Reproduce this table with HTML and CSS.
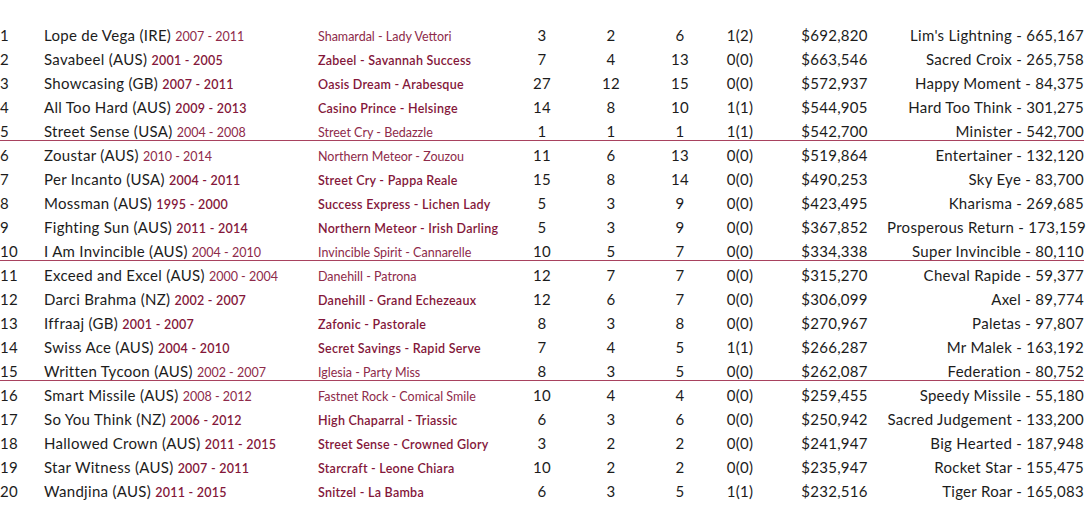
FILE: index.html
```html
<!DOCTYPE html>
<html lang="en">
<head>
<meta charset="utf-8">
<title>Sires</title>
<link rel="stylesheet" href="styles.css">
</head>
<body>
<div class="table">
  <div class="row lt"><span class="c rank">1</span><span class="c name">Lope de Vega (IRE) <em>2007 - 2011</em></span><span class="c par">Shamardal - Lady Vettori</span><span class="c n1">3</span><span class="c n2">2</span><span class="c n3">6</span><span class="c n4">1(2)</span><span class="c money">$692,820</span><span class="c best">Lim's Lightning - 665,167</span></div>
  <div class="row"><span class="c rank">2</span><span class="c name">Savabeel (AUS) <em>2001 - 2005</em></span><span class="c par">Zabeel - Savannah Success</span><span class="c n1">7</span><span class="c n2">4</span><span class="c n3">13</span><span class="c n4">0(0)</span><span class="c money">$663,546</span><span class="c best">Sacred Croix - 265,758</span></div>
  <div class="row"><span class="c rank">3</span><span class="c name">Showcasing (GB) <em>2007 - 2011</em></span><span class="c par">Oasis Dream - Arabesque</span><span class="c n1">27</span><span class="c n2">12</span><span class="c n3">15</span><span class="c n4">0(0)</span><span class="c money">$572,937</span><span class="c best">Happy Moment - 84,375</span></div>
  <div class="row"><span class="c rank">4</span><span class="c name">All Too Hard (AUS) <em>2009 - 2013</em></span><span class="c par">Casino Prince - Helsinge</span><span class="c n1">14</span><span class="c n2">8</span><span class="c n3">10</span><span class="c n4">1(1)</span><span class="c money">$544,905</span><span class="c best">Hard Too Think - 301,275</span></div>
  <div class="row lt sep"><span class="c rank">5</span><span class="c name">Street Sense (USA) <em>2004 - 2008</em></span><span class="c par">Street Cry - Bedazzle</span><span class="c n1">1</span><span class="c n2">1</span><span class="c n3">1</span><span class="c n4">1(1)</span><span class="c money">$542,700</span><span class="c best">Minister - 542,700</span></div>
  <div class="row lt"><span class="c rank">6</span><span class="c name">Zoustar (AUS) <em>2010 - 2014</em></span><span class="c par">Northern Meteor - Zouzou</span><span class="c n1">11</span><span class="c n2">6</span><span class="c n3">13</span><span class="c n4">0(0)</span><span class="c money">$519,864</span><span class="c best">Entertainer - 132,120</span></div>
  <div class="row"><span class="c rank">7</span><span class="c name">Per Incanto (USA) <em>2004 - 2011</em></span><span class="c par">Street Cry - Pappa Reale</span><span class="c n1">15</span><span class="c n2">8</span><span class="c n3">14</span><span class="c n4">0(0)</span><span class="c money">$490,253</span><span class="c best">Sky Eye - 83,700</span></div>
  <div class="row"><span class="c rank">8</span><span class="c name">Mossman (AUS) <em>1995 - 2000</em></span><span class="c par">Success Express - Lichen Lady</span><span class="c n1">5</span><span class="c n2">3</span><span class="c n3">9</span><span class="c n4">0(0)</span><span class="c money">$423,495</span><span class="c best">Kharisma - 269,685</span></div>
  <div class="row"><span class="c rank">9</span><span class="c name">Fighting Sun (AUS) <em>2011 - 2014</em></span><span class="c par">Northern Meteor - Irish Darling</span><span class="c n1">5</span><span class="c n2">3</span><span class="c n3">9</span><span class="c n4">0(0)</span><span class="c money">$367,852</span><span class="c best">Prosperous Return - 173,159</span></div>
  <div class="row lt sep"><span class="c rank">10</span><span class="c name">I Am Invincible (AUS) <em>2004 - 2010</em></span><span class="c par">Invincible Spirit - Cannarelle</span><span class="c n1">10</span><span class="c n2">5</span><span class="c n3">7</span><span class="c n4">0(0)</span><span class="c money">$334,338</span><span class="c best">Super Invincible - 80,110</span></div>
  <div class="row lt"><span class="c rank">11</span><span class="c name">Exceed and Excel (AUS) <em>2000 - 2004</em></span><span class="c par">Danehill - Patrona</span><span class="c n1">12</span><span class="c n2">7</span><span class="c n3">7</span><span class="c n4">0(0)</span><span class="c money">$315,270</span><span class="c best">Cheval Rapide - 59,377</span></div>
  <div class="row"><span class="c rank">12</span><span class="c name">Darci Brahma (NZ) <em>2002 - 2007</em></span><span class="c par">Danehill - Grand Echezeaux</span><span class="c n1">12</span><span class="c n2">6</span><span class="c n3">7</span><span class="c n4">0(0)</span><span class="c money">$306,099</span><span class="c best">Axel - 89,774</span></div>
  <div class="row"><span class="c rank">13</span><span class="c name">Iffraaj (GB) <em>2001 - 2007</em></span><span class="c par">Zafonic - Pastorale</span><span class="c n1">8</span><span class="c n2">3</span><span class="c n3">8</span><span class="c n4">0(0)</span><span class="c money">$270,967</span><span class="c best">Paletas - 97,807</span></div>
  <div class="row"><span class="c rank">14</span><span class="c name">Swiss Ace (AUS) <em>2004 - 2010</em></span><span class="c par">Secret Savings - Rapid Serve</span><span class="c n1">7</span><span class="c n2">4</span><span class="c n3">5</span><span class="c n4">1(1)</span><span class="c money">$266,287</span><span class="c best">Mr Malek - 163,192</span></div>
  <div class="row lt sep"><span class="c rank">15</span><span class="c name">Written Tycoon (AUS) <em>2002 - 2007</em></span><span class="c par">Iglesia - Party Miss</span><span class="c n1">8</span><span class="c n2">3</span><span class="c n3">5</span><span class="c n4">0(0)</span><span class="c money">$262,087</span><span class="c best">Federation - 80,752</span></div>
  <div class="row lt"><span class="c rank">16</span><span class="c name">Smart Missile (AUS) <em>2008 - 2012</em></span><span class="c par">Fastnet Rock - Comical Smile</span><span class="c n1">10</span><span class="c n2">4</span><span class="c n3">4</span><span class="c n4">0(0)</span><span class="c money">$259,455</span><span class="c best">Speedy Missile - 55,180</span></div>
  <div class="row"><span class="c rank">17</span><span class="c name">So You Think (NZ) <em>2006 - 2012</em></span><span class="c par">High Chaparral - Triassic</span><span class="c n1">6</span><span class="c n2">3</span><span class="c n3">6</span><span class="c n4">0(0)</span><span class="c money">$250,942</span><span class="c best">Sacred Judgement - 133,200</span></div>
  <div class="row"><span class="c rank">18</span><span class="c name">Hallowed Crown (AUS) <em>2011 - 2015</em></span><span class="c par">Street Sense - Crowned Glory</span><span class="c n1">3</span><span class="c n2">2</span><span class="c n3">2</span><span class="c n4">0(0)</span><span class="c money">$241,947</span><span class="c best">Big Hearted - 187,948</span></div>
  <div class="row"><span class="c rank">19</span><span class="c name">Star Witness (AUS) <em>2007 - 2011</em></span><span class="c par">Starcraft - Leone Chiara</span><span class="c n1">10</span><span class="c n2">2</span><span class="c n3">2</span><span class="c n4">0(0)</span><span class="c money">$235,947</span><span class="c best">Rocket Star - 155,475</span></div>
  <div class="row"><span class="c rank">20</span><span class="c name">Wandjina (AUS) <em>2011 - 2015</em></span><span class="c par">Snitzel - La Bamba</span><span class="c n1">6</span><span class="c n2">3</span><span class="c n3">5</span><span class="c n4">1(1)</span><span class="c money">$232,516</span><span class="c best">Tiger Roar - 165,083</span></div>
</div>
</body>
</html>
```

FILE: styles.css
```css
html, body {
  margin: 0;
  padding: 0;
  background: #ffffff;
}

body {
  font-family: "Lato", "Open Sans", sans-serif;
  font-size: 15px;
  letter-spacing: 0.3px;
  color: #1c1c1c;
}

.table {
  width: 1084px;
  padding-top: 21px;
}

.row {
  display: flex;
  align-items: baseline;
  box-sizing: border-box;
  height: 24px;
  padding-top: 6px;
  line-height: 17px;
  border-bottom: 1px solid transparent;
  white-space: nowrap;
}

.row.sep {
  border-bottom-color: #a8425f;
}

.c {
  flex: none;
}

.rank { width: 44px; }
.name { width: 274px; }
.par {
  width: 188px;
  font-size: 12.5px;
  color: #84173a;
  font-weight: 600;
  letter-spacing: 0.25px;
}
.name em {
  font-style: normal;
  font-size: 12.5px;
  color: #84173a;
  font-weight: 600;
  letter-spacing: 0.25px;
}
.row.lt .par,
.row.lt .name em {
  font-weight: 400;
  color: #8e2a4a;
  letter-spacing: 0;
}

.n1 { width: 72px; text-align: center; }
.n2 { width: 66px; text-align: center; }
.n3 { width: 72px; text-align: center; }
.n4 { width: 48px; text-align: center; }
.money {
  width: 105px;
  padding-left: 18px;
  text-align: center;
}
.best {
  flex: 1;
  display: flex;
  justify-content: flex-end;
}
```
